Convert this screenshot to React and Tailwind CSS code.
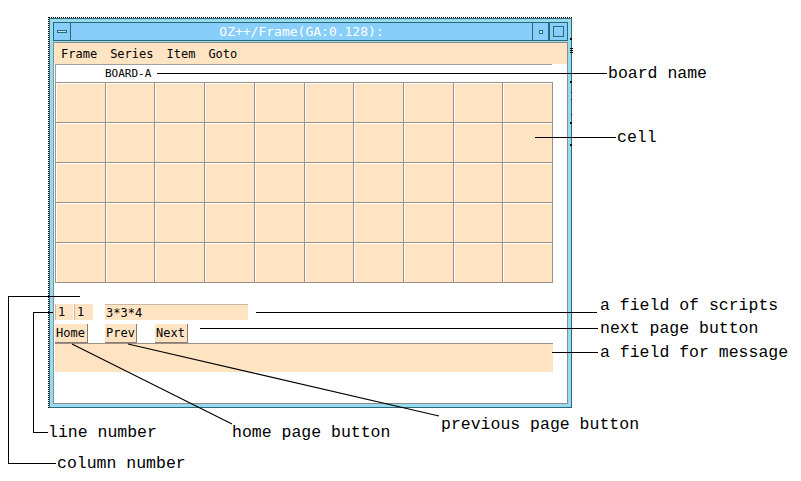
import React from "react";

const bisque = "bg-[#ffe4c4]";

const labels = [
  { text: "board name", x: 608, base: 78 },
  { text: "cell", x: 617, base: 142 },
  { text: "a field of scripts", x: 600, base: 310 },
  { text: "next page button", x: 600, base: 333 },
  { text: "a field for message", x: 600, base: 357 },
  { text: "previous page button", x: 441, base: 429 },
  { text: "home page button", x: 232, base: 437 },
  { text: "line number", x: 48, base: 437 },
  { text: "column number", x: 57, base: 468 },
];

const TitleButton = ({ children, className }) => (
  <div
    className={`flex items-center justify-center h-full border border-[#2e6878] bg-[#87cefa] ${className}`}
  >
    {children}
  </div>
);

const Window = () => {
  const cells = Array.from({ length: 50 });
  return (
    <div className="absolute left-[48px] top-[17px] w-[524px] h-[391px] border-l border-t border-dotted border-black">
      <div className="w-full h-full bg-[#96dcf0] border border-[#2e6878] p-[3px] flex flex-col gap-[1px]">
        {/* title bar */}
        <div className="flex h-[19px] shrink-0">
          <TitleButton className="w-[18px]">
            <div className="w-[10px] h-[3px] border border-[#2e6878] bg-[#b8e6fb]" />
          </TitleButton>
          <div className="flex-1 flex items-center justify-center border-y border-[#2e6878] bg-[#87cefa] text-white text-[13px] leading-none font-['DejaVu_Sans_Mono',monospace]">
            OZ++/Frame(GA:0.128):
          </div>
          <TitleButton className="w-[17px]">
            <div className="w-[4px] h-[4px] border border-[#2e6878] bg-[#c8ecfc]" />
          </TitleButton>
          <TitleButton className="w-[19px]">
            <div className="w-[11px] h-[11px] border border-[#2e6878]" />
          </TitleButton>
        </div>

        {/* client area */}
        <div className="flex-1 flex flex-col bg-white border border-[#8c8c8c] font-['DejaVu_Sans_Mono',monospace] text-black">
          <div className={`h-[21px] shrink-0 ${bisque} flex items-center gap-[13px] pl-[7px] text-[12px]`}>
            <span>Frame</span>
            <span>Series</span>
            <span>Item</span>
            <span>Goto</span>
          </div>

          <div className="h-[18px] shrink-0 mx-[1px] w-[497px] border-t border-l border-[#a0a0a0] bg-white flex items-center pl-[49px] text-[11px] leading-none">
            BOARD-A
          </div>

          <div className="ml-[1px] w-[498px] grid grid-cols-10 border-t border-l border-[#9c9088]">
            {cells.map((_, i) => (
              <div
                key={i}
                className={`h-[40px] ${bisque} border-r border-b border-[#9c9088] shadow-[inset_1px_1px_0_#ffffff]`}
              />
            ))}
          </div>

          <div className="h-[21px] shrink-0" />

          <div className="flex h-[16px] shrink-0 ml-[1px] text-[12px] leading-none">
            <div className={`w-[18px] ${bisque} border-l border-[#c8b8a8] flex items-center pl-[2px]`}>1</div>
            <div className={`w-[19px] ml-[1px] ${bisque} border-l border-[#c8b8a8] flex items-center pl-[2px]`}>1</div>
            <div className={`w-[143px] ml-[12px] ${bisque} border-t border-[#c8b8a8] flex items-center pl-[1px]`}>3*3*4</div>
          </div>

          <div className="flex h-[19px] shrink-0 mt-[4px] ml-[1px] text-[12px] leading-none">
            <div className={`w-[33px] ${bisque} border-r border-b border-[#8c7c70] flex items-center pl-[1px]`}>Home</div>
            <div className={`w-[32px] ml-[17px] ${bisque} border-r border-b border-[#8c7c70] flex items-center pl-[1px]`}>Prev</div>
            <div className={`w-[33px] ml-[18px] ${bisque} border-r border-b border-[#8c7c70] flex items-center pl-[1px]`}>Next</div>
          </div>

          <div className={`h-[29px] shrink-0 ml-[1px] w-[498px] ${bisque} border-t border-[#9c9088]`} />

          <div className="flex-1" />
        </div>
      </div>
    </div>
  );
};

const Callouts = () => (
  <svg
    className="absolute left-0 top-0"
    width="801"
    height="481"
    viewBox="0 0 801 481"
    shapeRendering="crispEdges"
  >
    <g stroke="#000" strokeWidth="1" fill="none">
      <line x1="157" y1="73.5" x2="607" y2="73.5" />
      <line x1="535" y1="137.5" x2="616" y2="137.5" />
      <line x1="256" y1="312.5" x2="597" y2="312.5" />
      <line x1="200" y1="328.5" x2="598" y2="328.5" />
      <line x1="552" y1="352.5" x2="598" y2="352.5" />
      <polyline points="53,312.5 33.5,312.5 33.5,432.5 48,432.5" />
      <polyline points="80,296.5 8.5,296.5 8.5,463.5 56,463.5" />
    </g>
    <g stroke="#000" strokeWidth="1.2" shapeRendering="auto">
      <line x1="128" y1="344" x2="439" y2="416" />
      <line x1="72" y1="344" x2="232" y2="424" />
    </g>
    <g fill="#000">
      <rect x="570" y="38" width="2" height="2" />
      <rect x="570" y="48" width="3" height="1" />
      <rect x="570" y="50" width="3" height="1" />
      <rect x="570" y="52" width="3" height="1" />
      <rect x="570" y="81" width="2" height="2" />
      <rect x="571" y="92" width="1" height="1" />
      <rect x="571" y="99" width="1" height="1" />
      <rect x="571" y="114" width="1" height="1" />
      <rect x="570" y="122" width="2" height="2" />
      <rect x="570" y="144" width="2" height="2" />
    </g>
  </svg>
);

export default function App() {
  return (
    <div className="relative w-[801px] h-[481px] bg-white overflow-hidden">
      <Window />
      <Callouts />
      {labels.map((l) => (
        <div
          key={l.text}
          className="absolute whitespace-pre text-[16.5px] leading-[16px] text-black font-['Liberation_Mono','Courier_New',monospace]"
          style={{ left: l.x, top: l.base - 12 }}
        >
          {l.text}
        </div>
      ))}
    </div>
  );
}
